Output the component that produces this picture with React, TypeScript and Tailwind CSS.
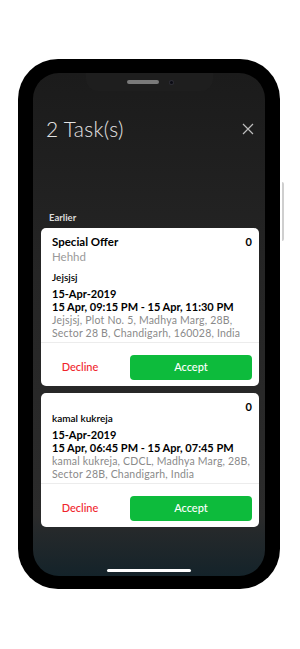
import React from 'react'

interface Task {
  title?: string
  subtitle?: string
  name: string
  date: string
  time: string
  address: string[]
  count: number
}

const tasks: Task[] = [
  {
    title: 'Special Offer',
    subtitle: 'Hehhd',
    name: 'Jejsjsj',
    date: '15-Apr-2019',
    time: '15 Apr, 09:15 PM - 15 Apr, 11:30 PM',
    address: ['Jejsjsj, Plot No. 5, Madhya Marg, 28B,', 'Sector 28 B, Chandigarh, 160028, India'],
    count: 0,
  },
  {
    name: 'kamal kukreja',
    date: '15-Apr-2019',
    time: '15 Apr, 06:45 PM - 15 Apr, 07:45 PM',
    address: ['kamal kukreja, CDCL, Madhya Marg, 28B,', 'Sector 28B, Chandigarh, India'],
    count: 0,
  },
]

function TaskCard({ task }: { task: Task }) {
  return (
    <div className="bg-white rounded-[5px] overflow-hidden">
      <div className="pl-[11px] pr-[7px]">
        {task.title ? (
          <>
            <div className="flex items-center justify-between pt-[7px] leading-[14px]">
              <span className="text-[11.5px] font-bold text-black">{task.title}</span>
              <span className="text-[11px] font-bold text-black">{task.count}</span>
            </div>
            <div className="text-[11.5px] leading-[15px] text-[#9a9a9a]">{task.subtitle}</div>
            <div className="mt-[6px] text-[10px] leading-[14px] font-semibold text-black">{task.name}</div>
          </>
        ) : (
          <>
            <div className="flex items-center justify-end pt-[9px] h-[19px] leading-[10px]">
              <span className="text-[11px] font-bold text-black">{task.count}</span>
            </div>
            <div className="text-[10px] leading-[12px] font-semibold text-black">{task.name}</div>
          </>
        )}
        <div className={task.title ? 'mt-[3px]' : 'mt-[4px]'}>
          <div className="text-[11px] leading-[13px] font-bold text-black">{task.date}</div>
          <div className="text-[11px] leading-[13px] font-bold text-black whitespace-nowrap">{task.time}</div>
        </div>
        <div className="mt-[1px] text-[10.5px] leading-[13px] tracking-[0.2px] text-[#8a8a8a] whitespace-nowrap">
          {task.address.map((line) => (
            <div key={line}>{line}</div>
          ))}
        </div>
      </div>
      <div className="mt-[2px] h-px bg-[#ececec]" />
      <div className="flex items-center pt-[12px] pb-[6px] pr-[7px]">
        <button className="w-[78px] text-center text-[11px] font-medium text-[#f0242c]">Decline</button>
        <button className="ml-[11px] flex-1 h-[25px] rounded-[4px] bg-[#0dbb3c] text-white text-[11px] font-medium">
          Accept
        </button>
      </div>
    </div>
  )
}

export default function App() {
  return (
    <div className="w-[300px] h-[649px] bg-white pt-[59px]" style={{ fontFamily: 'Lato, "Open Sans", sans-serif' }}>
      <div className="relative ml-[18px] w-[262px] h-[530px] bg-black rounded-[40px] px-[15px] pt-[14px] pb-[13px]">
        {/* side button */}
        <div className="absolute left-[264px] top-[123px] w-[2px] h-[59px] rounded-r-sm bg-[#cfcfcf]" />

        <div className="relative h-full rounded-[26px] overflow-hidden bg-[linear-gradient(to_bottom,#1b1b1b_0%,#252525_40%,#2b2b2b_88%,#14232a_100%)]">
          {/* notch */}
          <div className="absolute left-[53px] top-0 w-[127px] h-[18px] rounded-b-[12px] bg-[#1e1e1e] flex items-center justify-center">
            <div className="w-[32px] h-[4px] rounded-full bg-[#7a7a7a]" />
            <div className="ml-[11px] w-[3px] h-[3px] rounded-full bg-[#0a0a12] ring-1 ring-[#2c2c34]" />
          </div>

          <div className="flex flex-col h-full">
            <div className="flex items-center justify-between pt-[44px] pl-[13px] pr-[11px] h-[68px]">
              <span className="text-[21px] leading-[24px] font-light text-[#e2e2e2] tracking-[0.3px]">2 Task(s)</span>
              <svg width="12" height="12" viewBox="0 0 12 12" className="text-[#bdbdbd]">
                <path d="M1 1 L11 11 M11 1 L1 11" stroke="currentColor" strokeWidth="1.2" fill="none" />
              </svg>
            </div>

            <div className="mt-[71px] pl-[16px] text-[9.5px] leading-[12px] font-bold text-[#dcdcdc]">Earlier</div>

            <div className="mt-[4px] ml-[8px] mr-[6px] flex flex-col gap-[7px]">
              {tasks.map((t) => (
                <TaskCard key={t.name} task={t} />
              ))}
            </div>

            <div className="mt-auto mb-[4px] mx-auto w-[84px] h-[3px] rounded-full bg-white" />
          </div>
        </div>
      </div>
    </div>
  )
}
